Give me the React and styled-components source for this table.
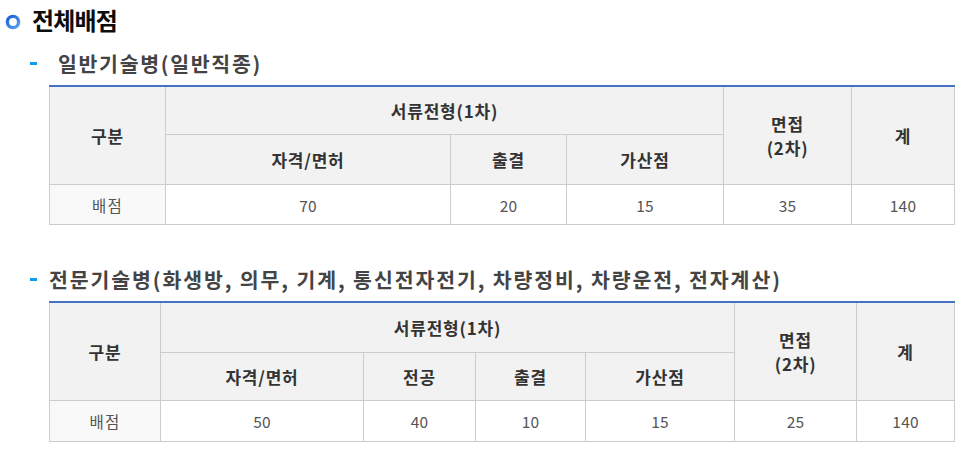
import React from "react";
import styled, { createGlobalStyle } from "styled-components";

const Global = createGlobalStyle`
  html, body { margin: 0; padding: 0; background: #fff; }
  body { font-family: "Noto Sans CJK KR", "Noto Sans", sans-serif; }
`;

const Page = styled.div`
  width: 965px;
  padding: 5px 11px 0 5px;
  box-sizing: border-box;
`;

const TitleRow = styled.div`
  display: flex;
  align-items: center;
  gap: 11px;
  height: 30px;
`;

const Title = styled.h2`
  margin: 0;
  font-size: 24px;
  font-weight: 700;
  color: #0d0d0d;
  line-height: 30px;
  letter-spacing: -0.8px;
`;

const SubRow = styled.div`
  display: flex;
  align-items: center;
  height: 30px;
  margin-top: ${(p) => p.$mt}px;
  padding-left: 25px;
`;

const Dash = styled.span`
  width: 7px;
  height: 3px;
  background: #0a9fee;
  margin-right: ${(p) => p.$gap}px;
  flex: none;
`;

const SubTitle = styled.h3`
  margin: 0;
  font-size: 20.5px;
  font-weight: 700;
  color: #444;
  letter-spacing: ${(p) => p.$ls}px;
  line-height: 30px;
`;

const Table = styled.table`
  margin: ${(p) => p.$mt}px 0 0 44px;
  width: 905px;
  table-layout: fixed;
  border-collapse: collapse;
  border-top: 2px solid #4671c6;
`;

const Th = styled.th`
  background: #f2f2f2;
  border: 1px solid #cccccc;
  border-top: ${(p) => (p.$first ? "none" : "1px solid #cccccc")};
  color: #333;
  font-weight: 700;
  font-size: 17px;
  letter-spacing: 0.8px;
  height: ${(p) => p.$h}px;
  padding: 0;
  line-height: 24px;
  text-align: center;
  vertical-align: middle;
`;

const Td = styled.td`
  border: 1px solid #cccccc;
  background: ${(p) => (p.$label ? "#f9f9f9" : "#fff")};
  color: #555;
  font-size: 15.5px;
  letter-spacing: ${(p) => (p.$label ? "1.2px" : "0.2px")};
  height: ${(p) => p.$h}px;
  padding: 0;
  text-align: center;
  vertical-align: middle;
`;

const Ring = () => (
  <svg width="16" height="16" viewBox="0 0 16 16" style={{ flex: "none", marginTop: 4 }}>
    <defs>
      <linearGradient id="rg" x1="0" y1="0" x2="1" y2="1">
        <stop offset="0" stopColor="#1a5fd6" />
        <stop offset="1" stopColor="#5aa0f0" />
      </linearGradient>
    </defs>
    <circle cx="8" cy="8" r="5.6" fill="none" stroke="url(#rg)" strokeWidth="3.4" />
  </svg>
);

function ScoreTable({ cols, subs, values, mt, h }) {
  return (
    <Table $mt={mt}>
      <colgroup>
        {cols.map((w, i) => (
          <col key={i} style={{ width: w }} />
        ))}
      </colgroup>
      <thead>
        <tr>
          <Th $first $h={h[0]} rowSpan={2}>구분</Th>
          <Th $first $h={h[0]} colSpan={subs.length}>서류전형(1차)</Th>
          <Th $first $h={h[0]} rowSpan={2}>
            면접
            <br />
            (2차)
          </Th>
          <Th $first $h={h[0]} rowSpan={2}>계</Th>
        </tr>
        <tr>
          {subs.map((s) => (
            <Th key={s} $h={h[1]}>{s}</Th>
          ))}
        </tr>
      </thead>
      <tbody>
        <tr>
          <Td $label $h={h[2]}>배점</Td>
          {values.map((v, i) => (
            <Td key={i} $h={h[2]}>{v}</Td>
          ))}
        </tr>
      </tbody>
    </Table>
  );
}

export default function App() {
  return (
    <>
      <Global />
      <Page>
        <TitleRow>
          <Ring />
          <Title>전체배점</Title>
        </TitleRow>
        <SubRow $mt={13}>
          <Dash $gap={21} />
          <SubTitle $ls={1.7}>일반기술병(일반직종)</SubTitle>
        </SubRow>
        <ScoreTable
          mt={7}
          h={[47, 49, 39]}
          cols={[116, 285, 116, 157, 128, 103]}
          subs={["자격/면허", "출결", "가산점"]}
          values={[70, 20, 15, 35, 140]}
        />
        <SubRow $mt={39}>
          <Dash $gap={12} />
          <SubTitle $ls={1.9}>전문기술병(화생방, 의무, 기계, 통신전자전기, 차량정비, 차량운전, 전자계산)</SubTitle>
        </SubRow>
        <ScoreTable
          mt={7}
          h={[49, 47, 40]}
          cols={[111, 203, 112, 110, 149, 122, 98]}
          subs={["자격/면허", "전공", "출결", "가산점"]}
          values={[50, 40, 10, 15, 25, 140]}
        />
      </Page>
    </>
  );
}
